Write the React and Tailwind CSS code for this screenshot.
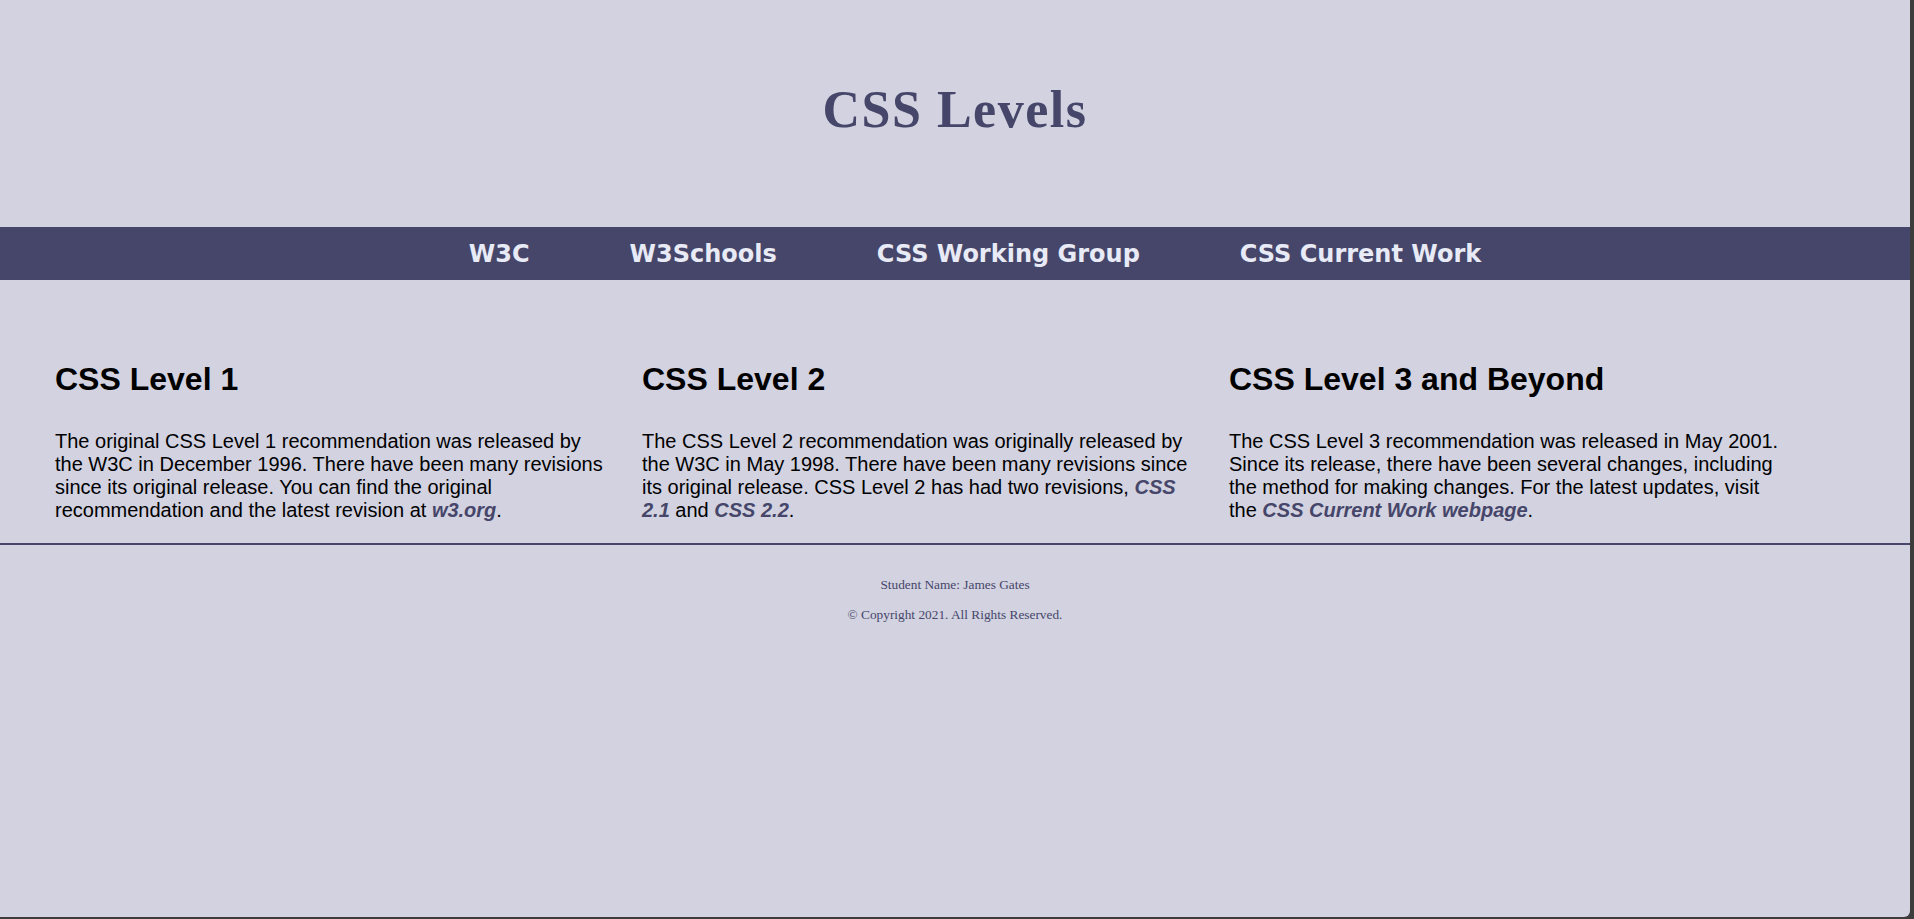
import React from "react";

const navLinks = ["W3C", "W3Schools", "CSS Working Group", "CSS Current Work"];

const Strong = ({ children }) => (
  <a href="#" className="font-bold italic text-[#46466a]">
    {children}
  </a>
);

const Column = ({ title, children }) => (
  <section className="w-[552px]">
    <h2 className="text-[32px] font-bold leading-[37px] text-black">{title}</h2>
    <p className="mt-[32px] text-[20px] leading-[23px] text-black">{children}</p>
  </section>
);

export default function App() {
  return (
    <div className="w-full h-[919px] bg-[#3c3c3c] font-['Liberation_Sans',Arial,sans-serif]">
      <div className="h-[917px] w-[1910px] bg-[#d2d2e0] rounded-br-[6px] overflow-hidden">
        {/* header */}
        <header className="h-[227px] flex items-center justify-center pb-[7px]">
          <h1 className="font-['Liberation_Serif',Georgia,serif] font-bold text-[52px] leading-none text-[#46466a] tracking-[1.5px]">
            CSS Levels
          </h1>
        </header>

        {/* nav */}
        <nav className="h-[53px] bg-[#46466a] flex items-center justify-center pl-10 gap-[100px]">
          {navLinks.map((l) => (
            <a
              key={l}
              href="#"
              className="font-['DejaVu_Sans',Verdana,sans-serif] font-bold text-[24px] leading-none text-[#e8eaf6]"
            >
              {l}
            </a>
          ))}
        </nav>

        {/* columns */}
        <main className="flex gap-[35px] pl-[55px] pt-[81px] pb-[21px]">
          <Column title="CSS Level 1">
            The original CSS Level 1 recommendation was released by the W3C in December 1996.
            There have been many revisions since its original release. You can find the original
            recommendation and the latest revision at <Strong>w3.org</Strong>.
          </Column>
          <Column title="CSS Level 2">
            The CSS Level 2 recommendation was originally released by the W3C in May 1998. There
            have been many revisions since its original release. CSS Level 2 has had two revisions,{" "}
            <Strong>CSS 2.1</Strong> and <Strong>CSS 2.2</Strong>.
          </Column>
          <Column title="CSS Level 3 and Beyond">
            The CSS Level 3 recommendation was released in May 2001. Since its release, there have
            been several changes, including the method for making changes. For the latest updates,
            visit the <Strong>CSS Current Work webpage</Strong>.
          </Column>
        </main>

        {/* footer */}
        <footer className="border-t-2 border-[#46466a] pt-[32px] text-center font-['Liberation_Serif','Times_New_Roman',serif] text-[13.33px] leading-[15px] text-[#46466a]">
          <p>Student Name: James Gates</p>
          <p className="mt-[15px]">© Copyright 2021. All Rights Reserved.</p>
        </footer>
      </div>
    </div>
  );
}
